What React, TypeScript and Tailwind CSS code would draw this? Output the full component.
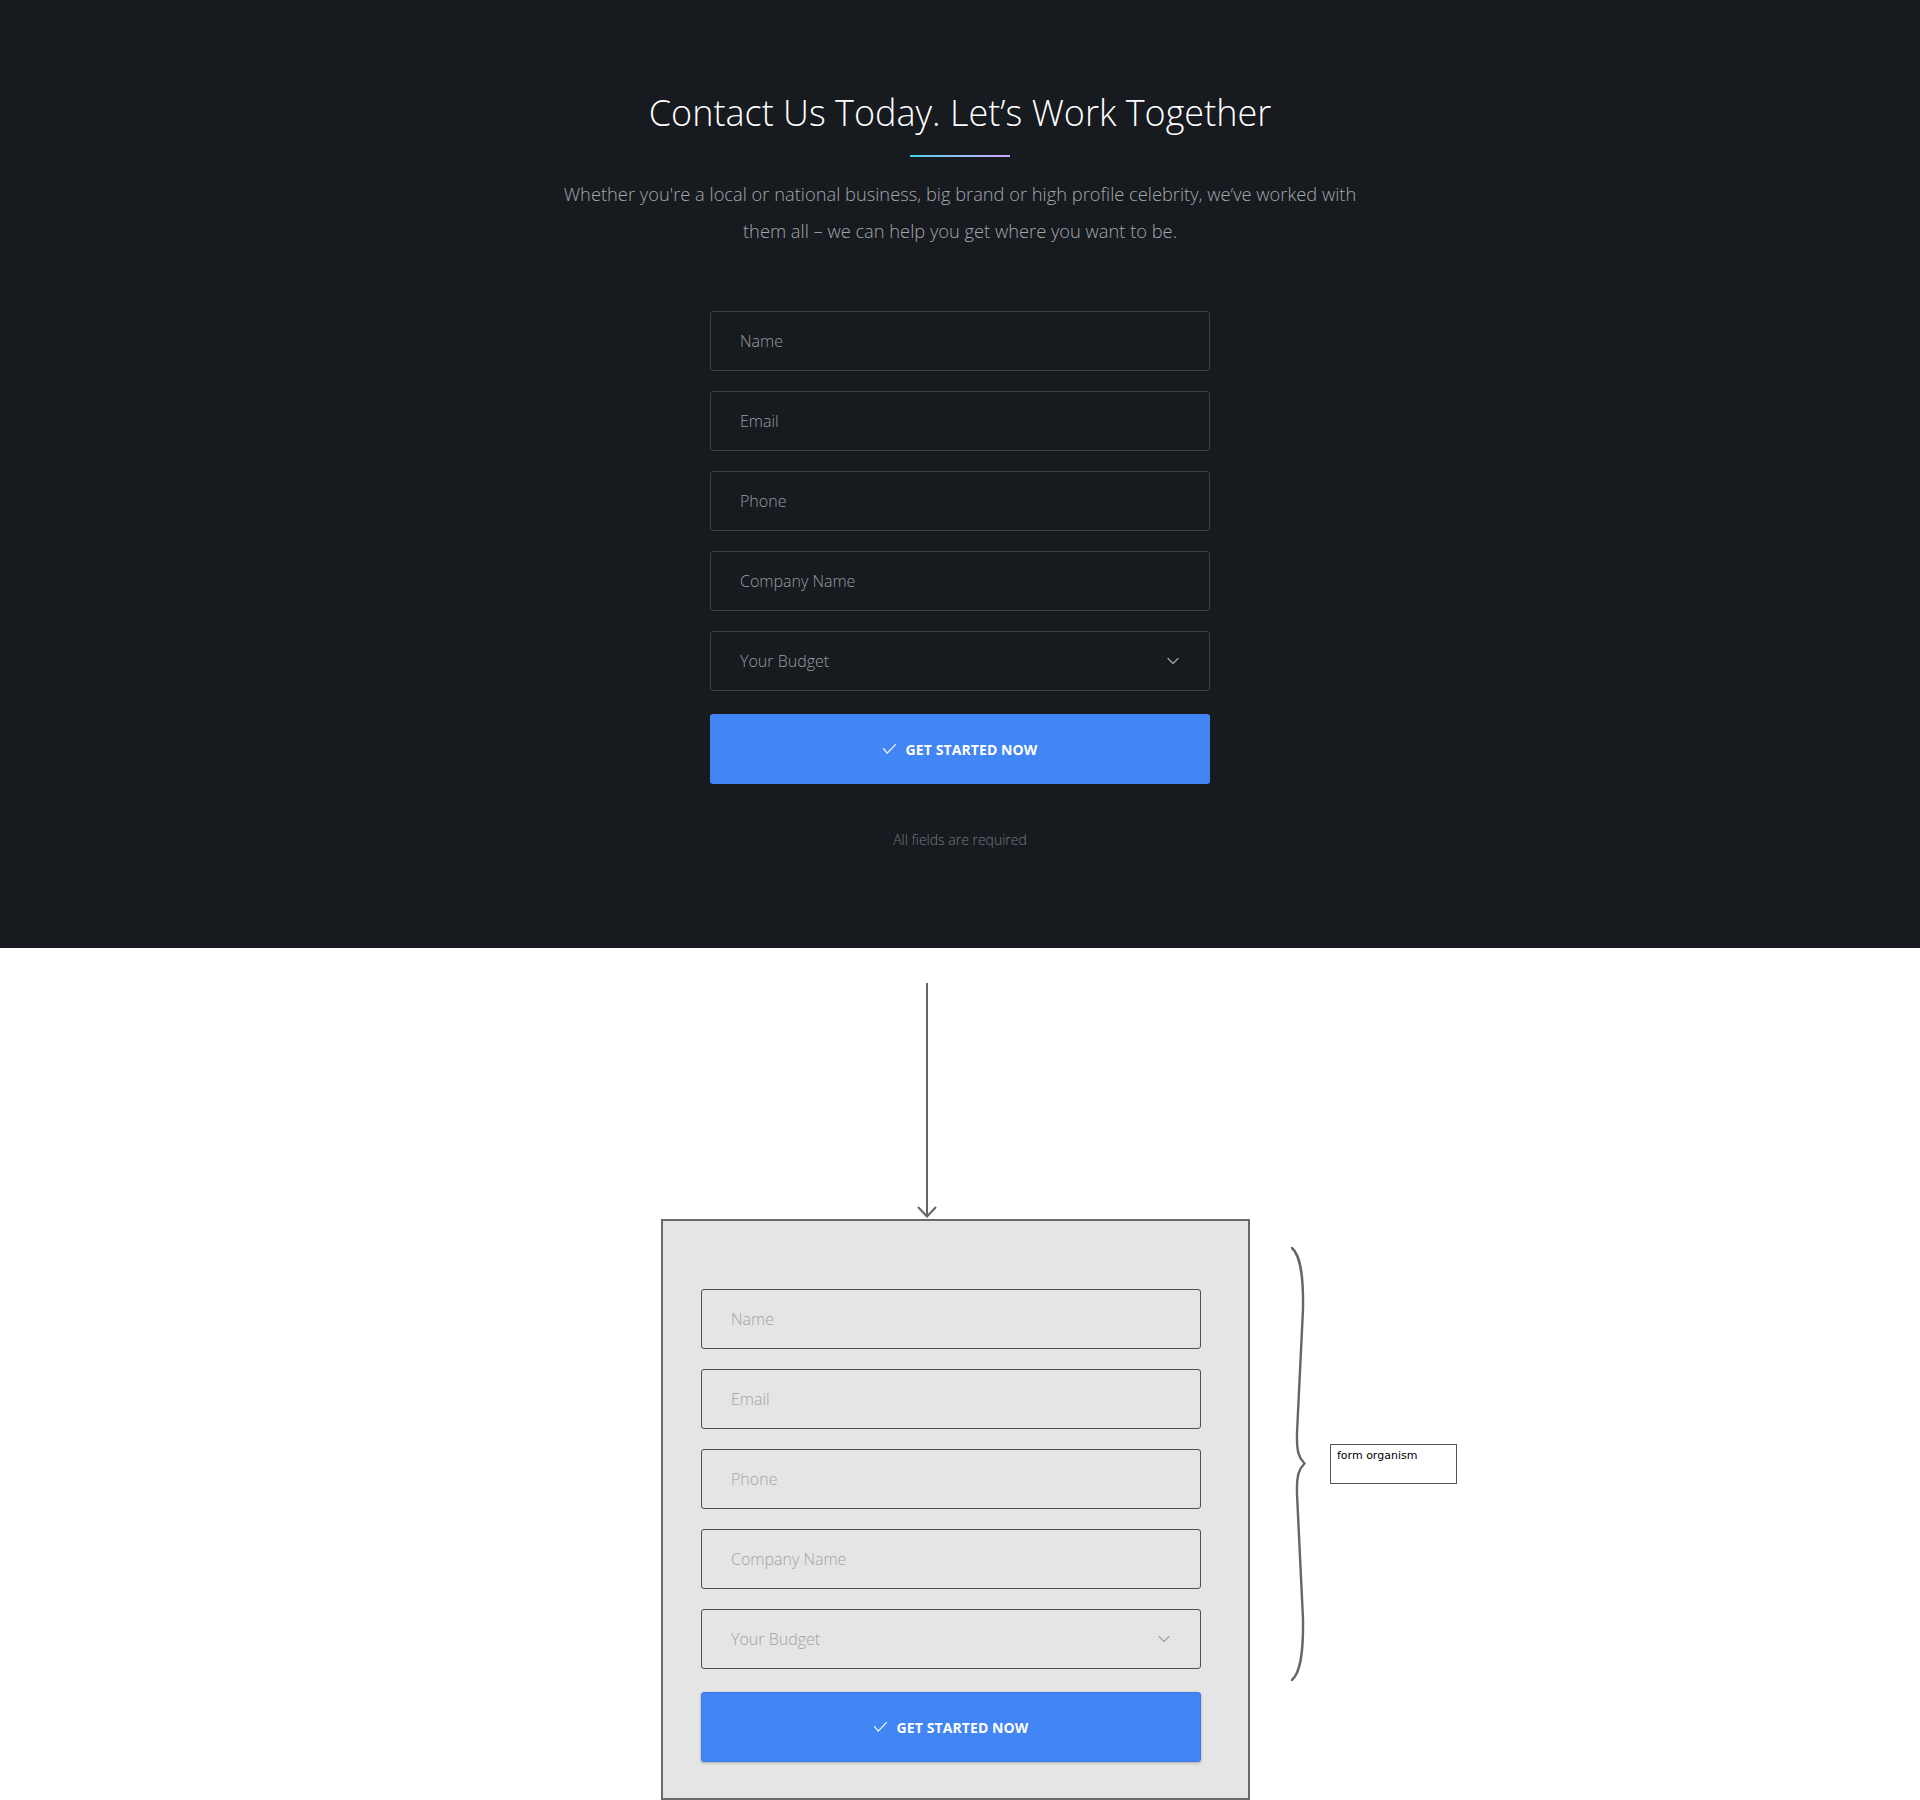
import { ChevronDown } from 'lucide-react';

const fields = ['Name', 'Email', 'Phone', 'Company Name'];

function CheckMark() {
  return (
    <svg width="13" height="10" viewBox="0 0 13 10" fill="none" className="shrink-0">
      <path d="M0.6 4.6 L4.2 9.2 L12.4 0.6" stroke="white" strokeWidth="1.2" strokeLinecap="round" strokeLinejoin="round" />
    </svg>
  );
}

type Tone = 'dark' | 'light';

function ContactForm({ tone }: { tone: Tone }) {
  const dark = tone === 'dark';
  const fieldCls = dark
    ? 'border-[#3d4149] text-[#9a9da3]'
    : 'border-[#4a4e58] text-[#a3a3a3]';

  return (
    <form className="flex w-[500px] flex-col font-['Open_Sans',sans-serif]" onSubmit={(e) => e.preventDefault()}>
      <div className="flex flex-col gap-[20px]">
        {fields.map((f) => (
          <div key={f} className={`flex h-[60px] items-center rounded-[3px] border pl-[29px] text-[16px] font-light ${fieldCls}`}>
            {f}
          </div>
        ))}
        <div className={`flex h-[60px] items-center justify-between rounded-[3px] border pl-[29px] pr-[26px] text-[16px] font-light ${fieldCls}`}>
          <span>Your Budget</span>
          <ChevronDown className={`h-[20px] w-[20px] ${dark ? 'text-[#9a9da3]' : 'text-[#a3a3a3]'}`} strokeWidth={1.6} />
        </div>
      </div>

      <button
        type="submit"
        className={`mt-[23px] flex h-[70px] items-center justify-center gap-[10px] rounded-[3px] bg-[#4285f4] text-[14px] font-bold uppercase tracking-[0.1px] text-white ${
          dark ? '' : 'border border-[#3b78e0] shadow-[0_1px_3px_rgba(0,0,0,0.25)]'
        }`}
      >
        <CheckMark />
        <span>Get Started Now</span>
      </button>
    </form>
  );
}

export default function App() {
  return (
    <div className="min-h-[1800px] w-full bg-white">
      {/* Contact section */}
      <section className="flex h-[948px] flex-col items-center bg-[#171a1f] pt-[91px] font-['Open_Sans',sans-serif]">
        <h2 className="text-[36px] font-light leading-[43px] text-white">Contact Us Today. Let’s Work Together</h2>
        <div className="mt-[21px] h-[2px] w-[100px] bg-gradient-to-r from-[#35d3ea] to-[#c7a4ff]" />
        <p className="mt-[18px] max-w-[830px] text-center text-[18.3px] font-light leading-[37px] text-[#a3a7ad]">
          Whether you're a local or national business, big brand or high profile celebrity, we’ve worked with them all – we can help you get where you want to be.
        </p>
        <div className="mt-[62px]">
          <ContactForm tone="dark" />
        </div>
        <p className="mt-[46px] text-[14px] font-light leading-[20px] text-[#757980]">All fields are required</p>
      </section>

      {/* Annotated breakdown */}
      <section className="pl-[661px] pt-[35px]">
        <svg width="20" height="236" viewBox="0 0 20 236" fill="none" className="ml-[256px] block">
          <path d="M10 0 V233" stroke="#666" strokeWidth="2" />
          <path d="M1 224 L10 233.5 L19 224" stroke="#666" strokeWidth="2" />
        </svg>

        <div className="flex items-start">
          <div className="h-[581px] w-[589px] border-2 border-[#6b6b6b] bg-[#e5e5e5] pl-[38px] pt-[68px]">
            <ContactForm tone="light" />
          </div>

          <svg width="16" height="435" viewBox="0 0 16 435" fill="none" className="ml-[41px] mt-[28px] shrink-0">
            <path
              d="M1 1 C9 8 12.5 26 12 62 L6 186 C5.5 205 8 211 13.5 216.5 C8 222 5.5 228 6 247 L12 372 C12.5 408 9 426 1 433"
              stroke="#666"
              strokeWidth="2.4"
              strokeLinecap="round"
            />
          </svg>

          <div className="ml-[23px] mt-[225px] h-[40px] w-[127px] border border-[#555] px-[6px] pt-[4px] font-['DejaVu_Sans',sans-serif] text-[11px] leading-[14px] text-black">
            form organism
          </div>
        </div>
      </section>
    </div>
  );
}
